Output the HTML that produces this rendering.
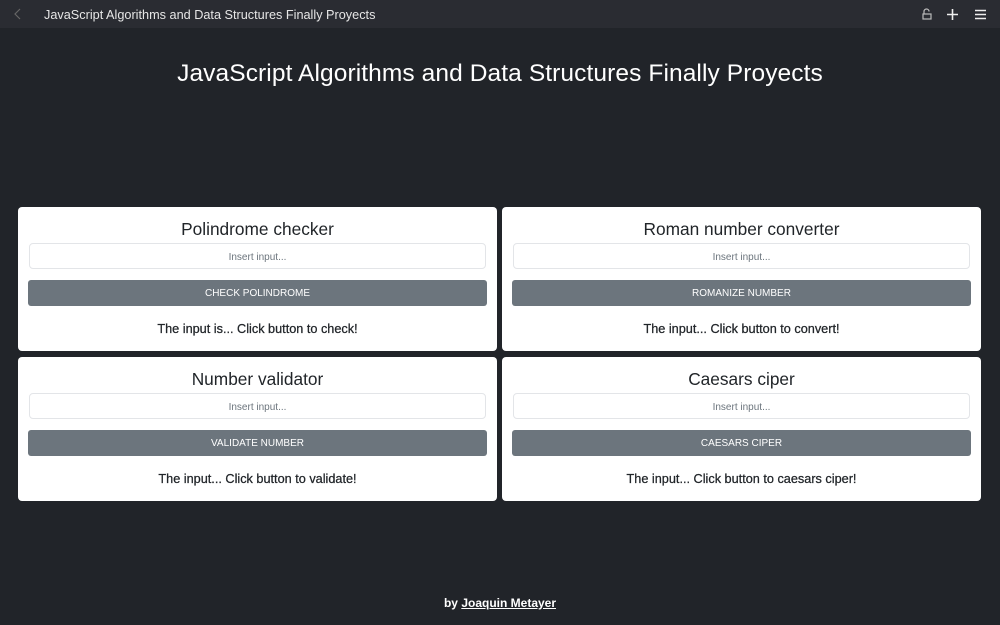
<!DOCTYPE html>
<html><head><meta charset="utf-8"><style>
*{box-sizing:border-box;margin:0;padding:0}
body{width:1000px;height:625px;background:#212429;font-family:"Liberation Sans",sans-serif;position:relative;overflow:hidden}
.bar{position:absolute;left:0;top:0;width:1000px;height:28px;background:#2a2c32;color:#e6e6e6;font-size:12.7px}
.bar .t{position:absolute;left:44px;top:8px}
h1{position:absolute;top:60px;left:0;width:1000px;text-align:center;color:#fff;font-size:24.5px;font-weight:normal;letter-spacing:0.1px}
.card{position:absolute;width:479px;height:144px;background:#fff;border-radius:4px;text-align:center}
.card h2{position:absolute;top:12px;width:100%;font-size:17.3px;font-weight:normal;color:#212529}
.inp{position:absolute;left:11px;top:36px;width:457px;height:26px;border:1px solid #e3e5e8;border-radius:4px;font-size:10px;color:#6c757d;line-height:27px}
.btn{position:absolute;left:10px;top:73px;width:459px;height:26px;background:#6c757d;border-radius:3px;color:#fff;font-size:10px;line-height:28px}
.res{position:absolute;top:115px;width:100%;font-size:12.7px;color:#212529;-webkit-text-stroke:0.25px #212529}
.foot{position:absolute;top:596px;width:1000px;text-align:center;color:#fff;font-size:12px;font-weight:bold}
.foot u{color:#fff}
</style></head><body>
<div class="bar"><svg style="position:absolute;left:14px;top:8px" width="8" height="12"><path d="M6 1L1 6L6 11" stroke="#666" fill="none" stroke-width="1.2"/></svg>
<span class="t">JavaScript Algorithms and Data Structures Finally Proyects</span>
<svg style="position:absolute;left:922px;top:8px" width="10" height="12"><path d="M2 6V3.5a2.5 2.5 0 0 1 5 0" stroke="#bbb" fill="none" stroke-width="1.2"/><rect x="1" y="6" width="8" height="5" stroke="#bbb" fill="none" stroke-width="1.2"/></svg>
<svg style="position:absolute;left:947px;top:9px" width="11" height="11"><path d="M5.5 0V11M0 5.5H11" stroke="#eee" stroke-width="1.6"/></svg>
<svg style="position:absolute;left:975px;top:9px" width="11" height="11"><path d="M0 1.5H11M0 5.5H11M0 9.5H11" stroke="#eee" stroke-width="1.6"/></svg>
</div>
<h1>JavaScript Algorithms and Data Structures Finally Proyects</h1>
<div class="card" style="left:18px;top:207px"><h2>Polindrome checker</h2><div class="inp">Insert input...</div><div class="btn">CHECK POLINDROME</div><div class="res">The input is... Click button to check!</div></div>
<div class="card" style="left:502px;top:207px"><h2>Roman number converter</h2><div class="inp">Insert input...</div><div class="btn">ROMANIZE NUMBER</div><div class="res">The input... Click button to convert!</div></div>
<div class="card" style="left:18px;top:357px"><h2>Number validator</h2><div class="inp">Insert input...</div><div class="btn">VALIDATE NUMBER</div><div class="res">The input... Click button to validate!</div></div>
<div class="card" style="left:502px;top:357px"><h2>Caesars ciper</h2><div class="inp">Insert input...</div><div class="btn">CAESARS CIPER</div><div class="res">The input... Click button to caesars ciper!</div></div>
<div class="foot">by <u>Joaquin Metayer</u></div>
</body></html>
